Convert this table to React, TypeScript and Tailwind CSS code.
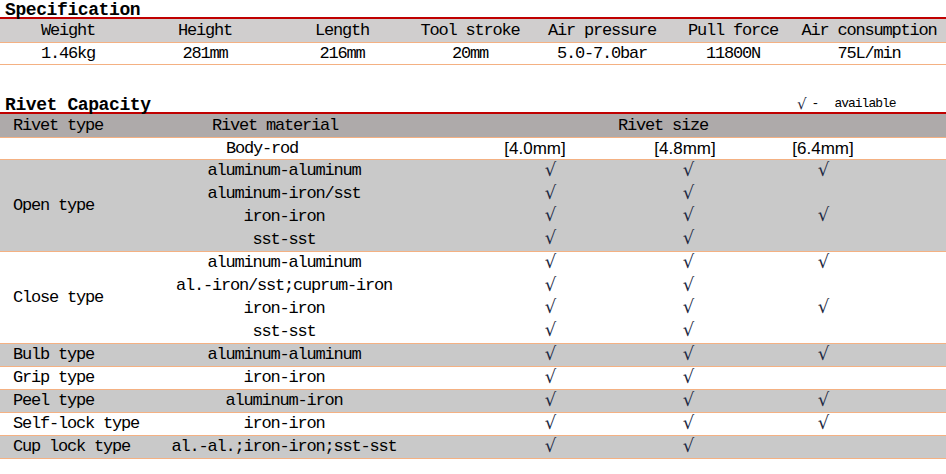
import React from 'react';

const mono = "font-['Liberation_Mono',monospace] text-[17px] leading-[20px] tracking-[-1.2px] whitespace-nowrap";

const specCols = 'grid grid-cols-[136px_138px_136px_120px_144px_118px_1fr]';
const rivetCols = 'grid grid-cols-[300px_50px_140px_136px_134px_1fr]';

const specHead = ['Weight', 'Height', 'Length', 'Tool stroke', 'Air pressure', 'Pull force', 'Air consumption'];
const specVals = ['1.46kg', '281mm', '216mm', '20mm', '5.0-7.0bar', '11800N', '75L/min'];

type Row = { material: string; sizes: [boolean, boolean, boolean] };
type Group = { type: string; rows: Row[]; gray: boolean };

const groups: Group[] = [
  {
    type: 'Open type',
    gray: true,
    rows: [
      { material: 'aluminum-aluminum', sizes: [true, true, true] },
      { material: 'aluminum-iron/sst', sizes: [true, true, false] },
      { material: 'iron-iron', sizes: [true, true, true] },
      { material: 'sst-sst', sizes: [true, true, false] },
    ],
  },
  {
    type: 'Close type',
    gray: false,
    rows: [
      { material: 'aluminum-aluminum', sizes: [true, true, true] },
      { material: 'al.-iron/sst;cuprum-iron', sizes: [true, true, false] },
      { material: 'iron-iron', sizes: [true, true, true] },
      { material: 'sst-sst', sizes: [true, true, false] },
    ],
  },
  { type: 'Bulb type', gray: true, rows: [{ material: 'aluminum-aluminum', sizes: [true, true, true] }] },
  { type: 'Grip type', gray: false, rows: [{ material: 'iron-iron', sizes: [true, true, false] }] },
  { type: 'Peel type', gray: true, rows: [{ material: 'aluminum-iron', sizes: [true, true, true] }] },
  { type: 'Self-lock type', gray: false, rows: [{ material: 'iron-iron', sizes: [true, true, true] }] },
  { type: 'Cup lock type', gray: true, rows: [{ material: 'al.-al.;iron-iron;sst-sst', sizes: [true, true, false] }] },
];

function Check({ small }: { small?: boolean }) {
  return (
    <span
      className={`font-['DejaVu_Serif',serif] text-[#1f2a44] ${
        small ? 'text-[15px] leading-[14px]' : 'text-[18px] leading-[18px]'
      }`}
    >
      √
    </span>
  );
}

function Heading({ children }: { children: React.ReactNode }) {
  return (
    <div className="h-[19px] flex items-end border-b-2 border-[#c00000]">
      <h2 className="pl-[5px] leading-[14px] font-['Liberation_Mono',monospace] font-bold text-[18px] tracking-[-0.4px] text-black">
        {children}
      </h2>
    </div>
  );
}

const sizeLabel = "font-['Liberation_Sans',sans-serif] text-[17px] tracking-normal";

export default function App() {
  return (
    <div className={`w-[946px] h-[474px] bg-white text-black overflow-hidden ${mono}`}>
      <Heading>Specification</Heading>
      <div className={`${specCols} bg-[#d0cece] h-[24px] items-center text-center border-b border-[#f4b183]`}>
        {specHead.map((h) => (
          <div key={h}>{h}</div>
        ))}
      </div>
      <div className={`${specCols} h-[22px] items-center text-center border-b border-[#f4b183]`}>
        {specVals.map((v) => (
          <div key={v}>{v}</div>
        ))}
      </div>

      <div className="mt-[30px] relative">
        <Heading>Rivet Capacity</Heading>
        <div className="absolute left-[797px] top-[2px] flex items-center gap-[6px] text-[13px] leading-[14px] tracking-[-1px]">
          <Check small />
          <span>-</span>
          <span className="ml-[10px]">available</span>
        </div>
      </div>

      <div className="flex bg-[#aeaaaa] h-[24px] items-center border-b border-[#f4b183]">
        <div className="w-[130px] pl-[13px]">Rivet type</div>
        <div className="w-[300px] text-center pr-[10px]">Rivet material</div>
        <div className="flex-1 text-center pr-[50px]">Rivet size</div>
      </div>

      <div className="flex h-[22px] items-center border-b border-[#f4b183]">
        <div className="w-[130px]" />
        <div className={`${rivetCols} flex-1 items-center text-center`}>
          <div className="pr-[36px]">Body-rod</div>
          <div />
          <div className={`${sizeLabel} pr-[30px]`}>[4.0mm]</div>
          <div className={`${sizeLabel} pr-[6px]`}>[4.8mm]</div>
          <div className={sizeLabel}>[6.4mm]</div>
          <div />
        </div>
      </div>

      {groups.map((g) => (
        <div
          key={g.type}
          className={`flex border-b border-[#f4b183] ${g.gray ? 'bg-[#c9c9c9]' : 'bg-white'} ${
            g.rows.length > 1 ? 'h-[92px]' : 'h-[23px]'
          }`}
        >
          <div className="w-[130px] pl-[13px] flex items-center">{g.type}</div>
          <div className="flex-1 flex flex-col">
            {g.rows.map((r) => (
              <div key={r.material} className={`${rivetCols} flex-1 items-center text-center`}>
                <div className="pl-[8px]">{r.material}</div>
                <div />
                {r.sizes.map((s, i) => (
                  <div key={i}>{s ? <Check /> : null}</div>
                ))}
                <div />
              </div>
            ))}
          </div>
        </div>
      ))}
    </div>
  );
}
